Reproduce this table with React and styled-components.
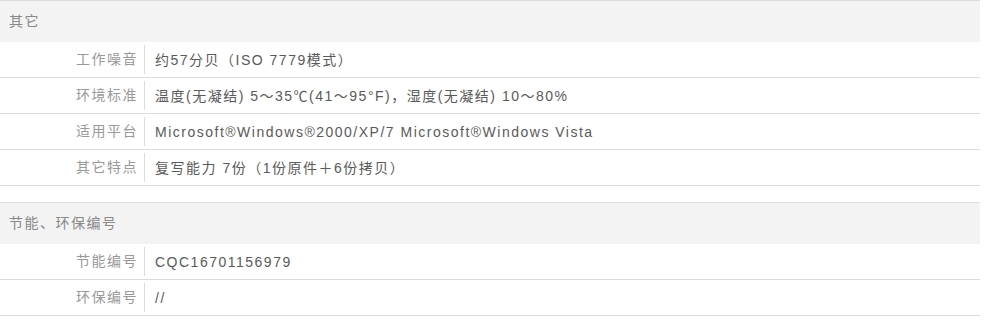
import React from "react";
import styled, { createGlobalStyle } from "styled-components";

const Global = createGlobalStyle`
  html, body { margin: 0; padding: 0; background: #fff; }
  body { font-family: "Liberation Sans", "Noto Sans CJK SC", Arial, sans-serif; }
`;

const Page = styled.div`
  width: 980px;
`;

const Section = styled.section`
  border-top: 1px solid #dcdcdc;
  margin-bottom: ${(p) => (p.$gap ? "16px" : "0")};
`;

const Header = styled.h3`
  margin: 0;
  height: 41px;
  line-height: 41px;
  padding-left: 9px;
  background: #f3f3f3;
  font-size: 14px;
  font-weight: normal;
  color: #888;
  letter-spacing: 1.5px;
`;

const Row = styled.dl`
  margin: 0;
  display: flex;
  border-bottom: 1px solid #dcdcdc;
  height: 35px;
  align-items: center;
`;

const Label = styled.dt`
  width: 138px;
  padding-right: 6px;
  height: 29px;
  line-height: 28px;
  text-align: right;
  border-right: 1px solid #dcdcdc;
  font-size: 14px;
  color: #999;
  letter-spacing: 1.5px;
`;

const Value = styled.dd`
  margin: 0;
  padding-left: 10px;
  line-height: 28px;
  font-size: 14px;
  color: #5a5a5a;
  letter-spacing: 1.5px;
  white-space: nowrap;
`;

const sections = [
  {
    title: "其它",
    rows: [
      ["工作噪音", "约57分贝（ISO 7779模式）"],
      ["环境标准", "温度(无凝结) 5～35℃(41～95°F)，湿度(无凝结) 10～80%"],
      ["适用平台", "Microsoft®Windows®2000/XP/7 Microsoft®Windows Vista"],
      ["其它特点", "复写能力 7份（1份原件＋6份拷贝）"],
    ],
  },
  {
    title: "节能、环保编号",
    rows: [
      ["节能编号", "CQC16701156979"],
      ["环保编号", "//"],
    ],
  },
];

export default function App() {
  return (
    <Page>
      <Global />
      {sections.map((s, i) => (
        <Section key={s.title} $gap={i < sections.length - 1}>
          <Header>{s.title}</Header>
          {s.rows.map(([k, v]) => (
            <Row key={k}>
              <Label>{k}</Label>
              <Value>{v}</Value>
            </Row>
          ))}
        </Section>
      ))}
    </Page>
  );
}
